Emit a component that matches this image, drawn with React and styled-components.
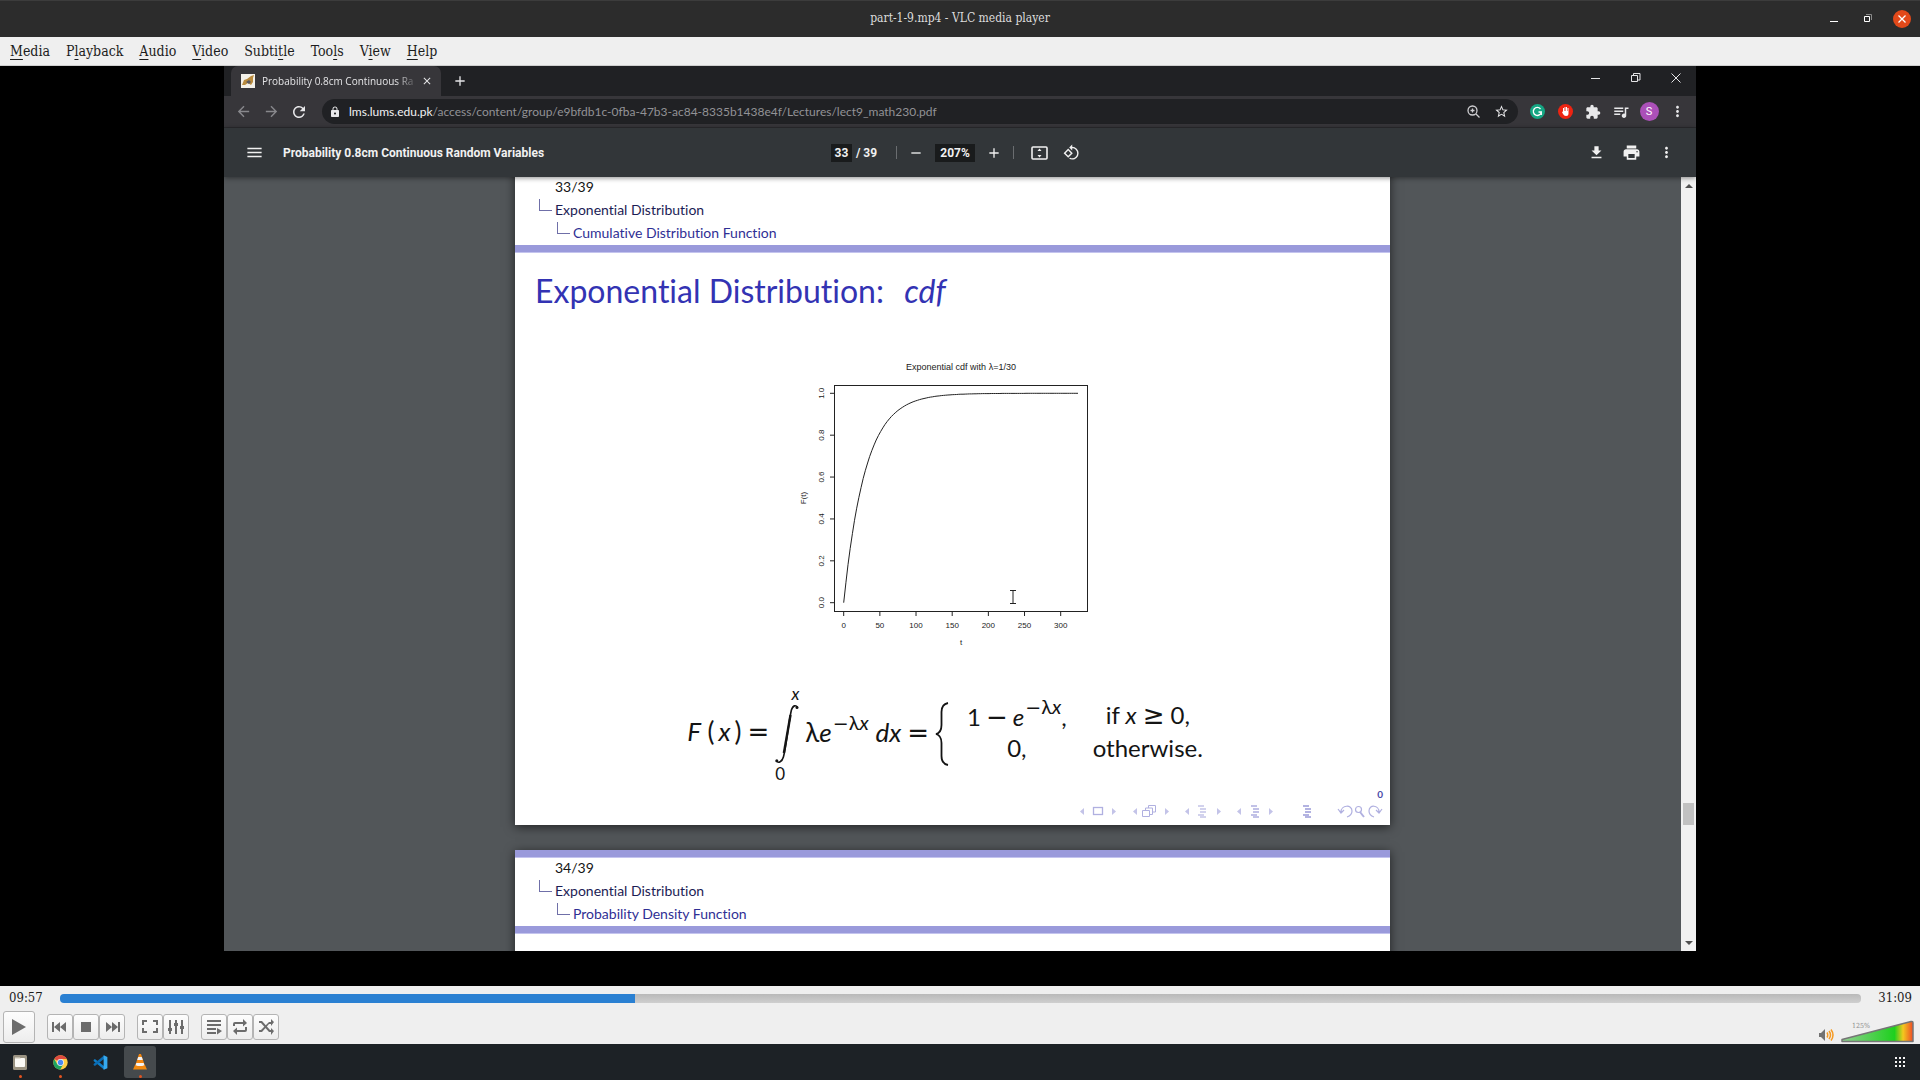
import React from "react";
import styled, { createGlobalStyle, css } from "styled-components";
import {
  MdAdd,
  MdArrowBack,
  MdArrowForward,
  MdClose,
  MdExtension,
  MdFileDownload,
  MdLock,
  MdMenu,
  MdMoreVert,
  MdPrint,
  MdQueueMusic,
  MdRefresh,
  MdRemove,
  MdRotate90DegreesCcw,
  MdStarBorder,
} from "react-icons/md";

const font = {
  shell: '"DejaVu Serif Condensed", "DejaVu Serif", serif',
  chrome: '"Open Sans", "Noto Sans", sans-serif',
  address: 'Lato, "Open Sans", sans-serif',
  pdf: 'Roboto, "Liberation Sans", sans-serif',
  slide: 'Lato, "Open Sans", sans-serif',
  operator: '"DejaVu Sans", sans-serif',
  plot: '"Liberation Sans", sans-serif',
};

const GlobalStyle = createGlobalStyle`
  *, *::before, *::after { box-sizing: border-box; }
  html, body { margin: 0; height: 100%; }
  body { overflow: hidden; background: #000; font-family: ${font.shell}; }
  button { border: 0; padding: 0; background: none; color: inherit; font: inherit; }
  svg { display: block; flex: none; }
`;

const Desktop = styled.div`
  display: flex;
  flex-direction: column;
  height: 100vh;
`;

/* ---------- VLC title and menu ---------- */

const TitleBar = styled.header`
  display: grid;
  grid-template-columns: 1fr auto 1fr;
  align-items: center;
  height: 37px;
  padding: 0 9px;
  background: #2c2c2c;
  border-top: 1px solid #3c3c3c;
  color: #dcdcdc;
`;

const WindowTitle = styled.h1`
  grid-column: 2;
  margin: 0;
  padding-bottom: 2px;
  font-size: 12px;
  line-height: 16px;
  font-weight: 400;
`;

const WindowButtons = styled.div`
  display: flex;
  justify-content: flex-end;
  align-items: center;
  gap: 16px;
`;

const WindowButton = styled.button`
  display: grid;
  place-items: center;
  width: 18px;
  height: 18px;
  border-radius: 50%;
  background: ${(p) => (p.$accent ? "#e2491a" : "transparent")};
  color: #fff;
`;

const MenuBar = styled.nav`
  display: flex;
  align-items: center;
  gap: 16px;
  height: 29px;
  padding: 0 10px 1px;
  background: #efefef;
  border-bottom: 1px solid #cfcfcf;
  color: #1c1c1c;
  font-size: 14px;
  line-height: 18px;
`;

const Mnemonic = styled.span`
  text-decoration: underline;
  text-underline-offset: 3px;
`;

/* ---------- Browser window in the video ---------- */

const VideoArea = styled.main`
  flex: 1;
  min-height: 0;
  display: flex;
  padding: 0 224px 35px;
  background: #000;
`;

const Browser = styled.section`
  flex: 1;
  min-width: 0;
  display: flex;
  flex-direction: column;
  background: #525659;
`;

const TabStrip = styled.div`
  display: flex;
  align-items: flex-start;
  gap: 4px;
  height: 30px;
  padding: 0 8px 0 7px;
  background: #202124;
  color: #e4e4e6;
`;

const Tab = styled.div`
  display: flex;
  align-items: center;
  gap: 7px;
  width: 210px;
  height: 30px;
  padding: 0 8px 0 10px;
  border-radius: 7px 7px 0 0;
  background: #37363a;
  font-family: ${font.chrome};
  font-size: 10px;
  line-height: 16px;
`;

const TabTitle = styled.span`
  flex: 1;
  white-space: nowrap;
  mask-image: linear-gradient(90deg, #000 88%, rgba(0, 0, 0, 0.2));
`;

const IconButton = styled.button`
  display: grid;
  place-items: center;
  flex: none;
  width: ${(p) => p.$size || 24}px;
  height: ${(p) => p.$size || 24}px;
  color: ${(p) => (p.$dim ? "#88888c" : "inherit")};
`;

const BrowserWindowButtons = styled.div`
  display: flex;
  gap: 16px;
  margin-left: auto;
`;

const AddressBar = styled.div`
  display: flex;
  align-items: center;
  gap: 4px;
  height: 32px;
  padding: 0 7px;
  background: #37363a;
  border-bottom: 1px solid #2b2b2e;
  color: #e8e8ea;
`;

const Omnibox = styled.form`
  flex: 1;
  min-width: 0;
  display: flex;
  align-items: center;
  height: 25px;
  margin: 0 3px 0 7px;
  padding: 0 3px 0 7px;
  border-radius: 13px;
  background: #202124;
  font-family: ${font.address};
  font-size: 12px;
  line-height: 18px;
`;

const Host = styled.label`
  margin-left: 8px;
  color: #f2f2f4;
`;

const UrlInput = styled.input`
  flex: 1;
  min-width: 0;
  padding: 0;
  border: 0;
  outline: 0;
  background: none;
  color: #929296;
  font: inherit;
`;

const Badge = styled.span`
  display: grid;
  place-items: center;
  width: ${(p) => p.$size}px;
  height: ${(p) => p.$size}px;
  border-radius: 50%;
  background: ${(p) => p.$color};
  color: #fff;
  font-family: ${font.pdf};
  font-size: 11px;
  line-height: 12px;
`;

const PdfToolbar = styled.div`
  position: relative;
  z-index: 1;
  display: grid;
  grid-template-columns: 1fr auto 1fr;
  align-items: center;
  height: 49px;
  padding: 0 18px;
  background: #323639;
  box-shadow: 0 1px 5px rgba(0, 0, 0, 0.45);
  color: #f1f1f1;
  font-family: ${font.pdf};
  font-size: 12px;
  line-height: 16px;
  font-weight: 700;
`;

const ToolGroup = styled.div`
  display: flex;
  align-items: center;
  gap: ${(p) => p.$gap}px;
  justify-content: ${(p) => (p.$end ? "flex-end" : "flex-start")};
  padding-right: ${(p) => (p.$end ? 0 : 4)}px;
`;

const DocTitle = styled.h2`
  margin: 0;
  font: inherit;
  white-space: nowrap;
`;

const ToolInput = styled.input`
  width: ${(p) => p.$width}px;
  height: 18px;
  padding: 0;
  border: 0;
  background: #191b1c;
  color: inherit;
  font: inherit;
  text-align: center;
`;

const Divider = styled.span`
  width: 1px;
  height: 13px;
  margin: 0 ${(p) => p.$after}px 0 ${(p) => p.$before}px;
  background: #6a6d70;
`;

const Viewer = styled.div`
  flex: 1;
  min-height: 0;
  display: flex;
`;

const Pages = styled.div`
  flex: 1;
  display: flex;
  flex-direction: column;
  align-items: center;
  gap: 25px;
  overflow: hidden;
`;

const ScrollTrack = styled.div`
  display: flex;
  flex-direction: column;
  align-items: center;
  width: 15px;
  padding: 7px 0 6px;
  background: #f1f1f1;
`;

const ScrollSpace = styled.div`
  flex: ${(p) => p.$grow} 0 0;
`;

const ScrollThumb = styled.div`
  width: 11px;
  height: 22px;
  background: #c1c1c1;
`;

/* ---------- Slides ---------- */

const SlidePage = styled.article`
  flex: none;
  display: flex;
  flex-direction: column;
  width: min(875px, 100%);
  aspect-ratio: 4 / 3;
  background: #fff;
  box-shadow: 0 2px 10px rgba(0, 0, 0, 0.6);
  font-family: ${font.slide};
  font-variant-ligatures: none;
  color: #141414;

  &:first-child {
    margin-top: -8px;
  }
`;

const Band = styled.div`
  flex: none;
  height: 8px;
  background: #9a9adb;
  border-bottom: 1px solid #c4c4ee;
`;

const Crumbs = styled.ol`
  flex: none;
  display: flex;
  flex-direction: column;
  height: 68px;
  margin: 0;
  padding: 0 24px;
  list-style: none;
  font-size: 14px;
  line-height: 23px;
`;

const Crumb = styled.li`
  display: flex;
  gap: 3px;
  height: 23px;
  margin-top: ${(p) => (p.$level === 0 ? -2 : 0)}px;
  padding-left: ${(p) => p.$level * 18 - 18}px;
  color: ${(p) => ["#141414", "#1c1c55", "#2f2f94"][p.$level]};
  ${(p) =>
    p.$level === 0 &&
    css`
      padding-left: 16px;
    `}
`;

const Elbow = styled.span`
  width: 13px;
  height: 12px;
  margin-top: 1px;
  border-left: 1px solid #6f6fa8;
  border-bottom: 1px solid #6f6fa8;
`;

const SlideTitle = styled.h3`
  height: 97px;
  margin: 0;
  padding: 16px 20px 0;
  color: #3333b3;
  font-size: 32px;
  line-height: 44px;
  font-weight: 400;
  white-space: nowrap;

  em {
    margin-left: 12px;
  }
`;

const PlotArea = styled.figure`
  display: flex;
  justify-content: center;
  margin: 0;
`;

const PlotSvg = styled.svg`
  font-family: ${font.plot};
  font-size: 8px;
  fill: #222;
`;

const Formula = styled.div`
  display: flex;
  align-items: center;
  justify-content: center;
  height: 100px;
  margin-top: 24px;
  padding-right: 15px;
  font-size: 26px;
  line-height: 33px;
  white-space: nowrap;
`;

const MathText = styled.span`
  padding-bottom: 5px;
`;

const Argument = styled.i`
  margin: 0 4px;
`;

const Operator = styled.span`
  margin: 0 ${(p) => p.$space || 0}px;
  font-family: ${font.operator};
  font-size: ${(p) => (p.$small ? 19 : 26)}px;
  line-height: 1;
`;

const Sup = styled.sup`
  margin-left: 1px;
  font-size: 20px;
  line-height: 0;
  vertical-align: 12px;
`;

const Integral = styled.span`
  display: flex;
  flex-direction: column;
  width: 24px;
  margin-right: 6px;
  font-size: 17px;
  line-height: 20px;
`;

const Limit = styled.span`
  align-self: ${(p) => (p.$upper ? "flex-end" : "flex-start")};
`;

const Cases = styled.span`
  display: grid;
  grid-template-columns: auto auto;
  grid-auto-rows: 33px;
  column-gap: 26px;
  justify-items: center;
  margin-left: 18px;
  padding-bottom: 6px;
  font-size: 24px;
`;

const Counter = styled.div`
  padding-right: 7px;
  color: #4a4aa8;
  font-size: 10px;
  line-height: 20px;
  font-weight: 700;
  text-align: right;
`;

const BeamerNav = styled.nav`
  display: flex;
  align-items: center;
  justify-content: flex-end;
  height: 14px;
  padding-right: 7px;
  color: #c3c3e8;
`;

/* ---------- VLC controls ---------- */

const Controls = styled.footer`
  background: #efefef;
  color: #1c1c1c;
`;

const SeekRow = styled.div`
  display: flex;
  align-items: center;
  gap: 17px;
  height: 24px;
  padding: 0 8px 0 9px;
  font-size: 13px;
  line-height: 16px;
`;

const SeekBar = styled.input`
  flex: 1;
  height: 9px;
  margin: 0;
  appearance: none;
  border-radius: 4px;
  background: linear-gradient(90deg, #2a80d2 var(--played), transparent var(--played)),
    linear-gradient(#b9b9b9, #cfcfcf);

  &::-webkit-slider-thumb {
    appearance: none;
    width: 0;
    height: 0;
  }
`;

const ButtonRow = styled.div`
  display: flex;
  align-items: center;
  gap: 12px;
  height: 34px;
  padding: 0 6px 0 3px;
`;

const ButtonSet = styled.div`
  display: flex;
`;

const PlayerButton = styled.button`
  display: grid;
  place-items: center;
  width: ${(p) => (p.$large ? 32 : 26)}px;
  height: ${(p) => (p.$large ? 32 : 26)}px;
  border: 1px solid #b4b4b4;
  border-radius: 3px;
  background: linear-gradient(#fdfdfd, #ededed);
  color: #6c6c6c;
`;

const Volume = styled.label`
  position: relative;
  display: flex;
  align-items: center;
  align-self: flex-end;
  gap: 6px;
  margin-left: auto;
  padding-bottom: 1px;
`;

const VolumeRange = styled.input`
  position: absolute;
  inset: 0 0 0 auto;
  width: 74px;
  margin: 0;
  opacity: 0;
`;

/* ---------- Taskbar ---------- */

const Taskbar = styled.nav`
  display: flex;
  align-items: center;
  gap: 8px;
  height: 36px;
  padding: 0 10px 0 4px;
  background: #1d2226;
`;

const AppButton = styled.button`
  position: relative;
  display: grid;
  place-items: center;
  width: 32px;
  height: 32px;
  border-radius: 3px;
  background: ${(p) => (p.$active ? "#454a4d" : "transparent")};

  &::after {
    content: "";
    position: absolute;
    left: 15px;
    bottom: 0;
    width: 3px;
    height: 3px;
    border-radius: 50%;
    background: ${(p) => (p.$running ? "#e2531f" : "transparent")};
  }
`;

const GridButton = styled(IconButton)`
  margin-left: auto;
  color: #f4f4f4;
`;

/* ---------- Data ---------- */

const MENUS = [
  ["", "M", "edia"],
  ["P", "l", "ayback"],
  ["", "A", "udio"],
  ["", "V", "ideo"],
  ["Subti", "t", "le"],
  ["Too", "l", "s"],
  ["V", "i", "ew"],
  ["", "H", "elp"],
];

const PLAYED = 597;
const LENGTH = 1869;

/* ---------- Pieces ---------- */

const plotX = (t) => 61.7 + t * 0.7233;
const plotY = (f) => 252.7 - f * 209.4;

function Plot() {
  const points = [];
  for (let t = 0; t <= 324; t += 3) {
    points.push(`${plotX(t).toFixed(1)},${plotY(1 - Math.exp(-t / 30)).toFixed(1)}`);
  }
  return (
    <PlotSvg width="341" height="310" viewBox="0 0 341 310" role="img" aria-label="Exponential cdf">
      <text x="179" y="20" textAnchor="middle" fontSize="9">
        Exponential cdf with λ=1/30
      </text>
      <g fill="none" stroke="#222" strokeWidth="1">
        <rect x="52.5" y="35.5" width="253" height="226" />
        {[0, 0.2, 0.4, 0.6, 0.8, 1].map((f) => (
          <path key={f} d={`M48 ${plotY(f)}H52.5`} />
        ))}
        {[0, 50, 100, 150, 200, 250, 300].map((t) => (
          <path key={t} d={`M${plotX(t)} 261.5V266`} />
        ))}
        <polyline points={points.join(" ")} />
        <path d="M228 240.5H234M231 240.5V253M228 253.5H234" />
      </g>
      {[0, 0.2, 0.4, 0.6, 0.8, 1].map((f) => (
        <text key={f} textAnchor="middle" transform={`translate(42 ${plotY(f)}) rotate(-90)`}>
          {f.toFixed(1)}
        </text>
      ))}
      {[0, 50, 100, 150, 200, 250, 300].map((t) => (
        <text key={t} x={plotX(t)} y="278" textAnchor="middle">
          {t}
        </text>
      ))}
      <text x="179" y="295" textAnchor="middle">
        t
      </text>
      <text textAnchor="middle" transform="translate(24 148) rotate(-90)">
        F(t)
      </text>
    </PlotSvg>
  );
}

function SlideHeader({ number, topic }) {
  return (
    <>
      <Band />
      <Crumbs>
        <Crumb $level={0}>{number}/39</Crumb>
        <Crumb $level={1}>
          <Elbow />
          Exponential Distribution
        </Crumb>
        <Crumb $level={2}>
          <Elbow />
          {topic}
        </Crumb>
      </Crumbs>
      <Band />
    </>
  );
}

const Exponent = () => (
  <Sup>
    <Operator $small>−</Operator>λ<i>x</i>
  </Sup>
);

function CdfFormula() {
  return (
    <Formula>
      <MathText>
        <i>F</i> (<Argument>x</Argument>)<Operator $space={6}>=</Operator>
      </MathText>
      <Integral>
        <Limit $upper>
          <i>x</i>
        </Limit>
        <svg width="24" height="60" viewBox="0 0 24 60">
          <path
            d="M22.500 3.500C21 .8 18 1 16.400 6C14 16 11 44 8.400 53C7 58 3.500 59.500 1.200 57"
            fill="none"
            stroke="#141414"
            strokeWidth="1.600"
          />
          <path d="M15.500 11L8.900 49" stroke="#141414" strokeWidth="2.400" />
          <circle cx="22" cy="3.500" r="1.500" fill="#141414" />
          <circle cx="1.800" cy="56.800" r="1.500" fill="#141414" />
        </svg>
        <Limit>0</Limit>
      </Integral>
      <MathText>
        λ<i>e</i>
        <Exponent /> <i>dx</i>
        <Operator $space={6}>=</Operator>
      </MathText>
      <svg width="14" height="64" viewBox="0 0 14 64">
        <path
          d="M13 1C8 2 6.500 5 6.500 10V23C6.500 28 5 31 1 32C5 33 6.500 36 6.500 41V54C6.500 59 8 62 13 63"
          fill="none"
          stroke="#141414"
          strokeWidth="1.800"
        />
      </svg>
      <Cases>
        <span>
          1<Operator $space={5}>−</Operator>
          <i>e</i>
          <Exponent />,
        </span>
        <span>
          if <i>x</i>
          <Operator $space={6}>≥</Operator>0,
        </span>
        <span>0,</span>
        <span>otherwise.</span>
      </Cases>
    </Formula>
  );
}

const navLines = (x, top) => (
  <path
    d={`M${x} ${top}h6M${x + 2} ${top + 3}h6M${x + 2} ${top + 6}h6M${x} ${top + 9}h6M${x + 2} ${top + 11}h6`}
    strokeWidth="1.500"
  />
);

function BeamerSymbols() {
  return (
    <BeamerNav aria-label="Slide navigation">
      <svg width="304" height="14" viewBox="0 0 304 14" fill="none" stroke="currentColor">
        {[0, 53, 105, 157].map((x) => (
          <g key={x} fill="currentColor" stroke="none">
            <path d={`M${x + 5} 4v7L${x + 1} 7.500z`} />
            <path d={`M${x + 33} 4v7l4-3.500z`} />
          </g>
        ))}
        <g stroke="#b0b0e0">
          <rect x="14.500" y="3.500" width="9" height="7" strokeWidth="1.300" />
          <path d="M63.500 6.500h7v6h-7zM66.500 6V4h7v6.500h-2.500M69.500 4V1.500h7V8H74" />
        </g>
        {navLines(119, 2)}
        <g stroke="#aeaee0">{navLines(172, 2)}</g>
        <g stroke="#9a9ad8">{navLines(224, 2)}</g>
        <g stroke="#b0b0e0" strokeWidth="1.200">
          <path d="M259 5l3 4 3-3M262 8C262 1 273 0 273 7C273 10 271 12 268 13" />
          <circle cx="279.500" cy="5.500" r="3" />
          <path d="M281 8l4 5" strokeWidth="2" />
          <path d="M303 5l-3 4-3-3M300 8C300 1 290 0 290 7C290 10 292 12 295 13" />
        </g>
      </svg>
    </BeamerNav>
  );
}

const PLAYER_ICONS = {
  previous: <path d="M1 4h2v10H1zM3 9l6-5v10zM9 9l6-5v10z" />,
  stop: <path d="M4 4h10v10H4z" />,
  next: <path d="M15 4h2v10h-2zM15 9L9 4v10zM9 9L3 4v10z" />,
  fullscreen: <path d="M1 2h5v2H3v3H1zM12 2h5v5h-2V4h-3zM1 10h2v3h3v2H1zM15 10h2v5h-5v-2h3z" />,
  equalizer: <path d="M2 2h2v8h1v3H4v3H2v-3H1v-3h1zM8 2h2v3h1v3h-1v8H8V8H7V5h1zM14 2h2v6h1v3h-1v5h-2v-5h-1V8h1z" />,
  playlist: <path d="M2 2h14v2H2zM2 6h14v2H2zM2 10h9v2H2zM2 14h9v2H2zM12 10l5 3-5 3.500z" />,
  loop: (
    <path d="M2 8V6q0-2 2-2h8V1l4 4-4 3.500V6H4v2zM16 9v3q0 2-2 2H6v3l-4-4 4-3.500V12h8V9z" />
  ),
  shuffle: (
    <path d="M2 3h3l8 9h1v-2l3 3-3 4v-3h-2L4 5H2zM14 1l3 3-3 4V6h-2L5 14H2v-2h2l8-8h2z" />
  ),
};

function Glyph({ name }) {
  return (
    <svg width="18" height="18" viewBox="0 0 18 18" fill="currentColor">
      {PLAYER_ICONS[name]}
    </svg>
  );
}

function PlayerControl({ name }) {
  return (
    <PlayerButton type="button" aria-label={name}>
      <Glyph name={name} />
    </PlayerButton>
  );
}

export default function App() {
  return (
    <Desktop>
      <GlobalStyle />
      <TitleBar>
        <WindowTitle>part-1-9.mp4 - VLC media player</WindowTitle>
        <WindowButtons>
          <WindowButton aria-label="Minimize">
            <svg width="10" height="10" stroke="#fff">
              <path d="M1 7.500h8" />
            </svg>
          </WindowButton>
          <WindowButton aria-label="Restore">
            <svg width="10" height="10" fill="none" stroke="#fff">
              <path d="M1.500 2.500h5v5h-5z" />
              <path d="M3 .5h5.500V6" stroke="#8a8a8a" />
            </svg>
          </WindowButton>
          <WindowButton $accent aria-label="Close">
            <svg width="10" height="10" stroke="#fff" strokeWidth="1.300">
              <path d="M1.500 1.500l7 7M8.500 1.500l-7 7" />
            </svg>
          </WindowButton>
        </WindowButtons>
      </TitleBar>
      <MenuBar>
        {MENUS.map(([before, key, after]) => (
          <button type="button" key={before + key + after}>
            {before}
            <Mnemonic>{key}</Mnemonic>
            {after}
          </button>
        ))}
      </MenuBar>

      <VideoArea>
        <Browser>
          <TabStrip>
            <Tab>
              <svg width="14" height="14" viewBox="0 0 14 14">
                <rect width="14" height="14" fill="#f4f1ea" />
                <path d="M1 11l2-5 3-1 4-3 3-1-1 3v4l-2 3-3-2-3 2z" fill="#b98b3e" />
                <path d="M5 8l3-2 2 2-2 2z" fill="#5b5a62" />
              </svg>
              <TabTitle>Probability 0.8cm Continuous Ra</TabTitle>
              <IconButton $size={12} aria-label="Close tab">
                <MdClose size={12} />
              </IconButton>
            </Tab>
            <IconButton $size={30} aria-label="New tab">
              <MdAdd size={16} />
            </IconButton>
            <BrowserWindowButtons>
              <IconButton aria-label="Minimize">
                <svg width="10" height="10" stroke="currentColor">
                  <path d="M0 5.500h9" />
                </svg>
              </IconButton>
              <IconButton aria-label="Restore">
                <svg width="10" height="10" fill="none" stroke="currentColor">
                  <path d="M.5 2.500h6v6h-6zM2.500 2V.5H9V7H7" />
                </svg>
              </IconButton>
              <IconButton aria-label="Close">
                <svg width="10" height="10" stroke="currentColor">
                  <path d="M.5.500l9 9M9.500.500l-9 9" />
                </svg>
              </IconButton>
            </BrowserWindowButtons>
          </TabStrip>

          <AddressBar>
            <IconButton $dim aria-label="Back">
              <MdArrowBack size={17} />
            </IconButton>
            <IconButton $dim aria-label="Forward">
              <MdArrowForward size={17} />
            </IconButton>
            <IconButton aria-label="Reload">
              <MdRefresh size={18} />
            </IconButton>
            <Omnibox>
              <MdLock size={12} />
              <Host htmlFor="address">lms.lums.edu.pk</Host>
              <UrlInput
                id="address"
                defaultValue="/access/content/group/e9bfdb1c-0fba-47b3-ac84-8335b1438e4f/Lectures/lect9_math230.pdf"
              />
              <IconButton $size={28} type="button" aria-label="Zoom">
                <svg width="13" height="13" viewBox="0 0 13 13" fill="none" stroke="#cfcfd2" strokeWidth="1.300">
                  <circle cx="5.500" cy="5.500" r="4.500" />
                  <path d="M9 9l3.500 3.500M5.500 3.500v4M3.500 5.500h4" />
                </svg>
              </IconButton>
              <IconButton $size={28} type="button" aria-label="Bookmark">
                <MdStarBorder size={15} />
              </IconButton>
            </Omnibox>
            <IconButton aria-label="Grammarly">
              <Badge $size={15} $color="#15a683">
                <svg width="11" height="11" viewBox="0 0 11 11" fill="none" stroke="#fff" strokeWidth="1.300">
                  <path d="M8.500 3A4 4 0 1 0 9.300 6H6.500M9.300 6v3" />
                </svg>
              </Badge>
            </IconButton>
            <IconButton aria-label="Content blocker">
              <Badge $size={15} $color="#ee2412">
                <svg width="11" height="11" viewBox="0 0 11 11" fill="#fff">
                  <path d="M3 2h1v3h.5V1h1v4H6V1h1v4h.5V2h1v5.500Q8.500 10 6 10 4 10 3 8L2 6l1-.5z" />
                </svg>
              </Badge>
            </IconButton>
            <IconButton aria-label="Extensions">
              <MdExtension size={16} />
            </IconButton>
            <IconButton aria-label="Media">
              <MdQueueMusic size={18} />
            </IconButton>
            <IconButton aria-label="Profile">
              <Badge $size={19} $color="#ab50b8">
                S
              </Badge>
            </IconButton>
            <IconButton aria-label="Browser menu">
              <MdMoreVert size={17} />
            </IconButton>
          </AddressBar>

          <PdfToolbar>
            <ToolGroup $gap={17}>
              <IconButton aria-label="Sidebar">
                <MdMenu size={19} />
              </IconButton>
              <DocTitle>Probability 0.8cm Continuous Random Variables</DocTitle>
            </ToolGroup>
            <ToolGroup $gap={4}>
              <ToolInput $width={21} defaultValue="33" aria-label="Page" />
              <span>/ 39</span>
              <Divider $before={15} $after={0} />
              <IconButton aria-label="Zoom out" $size={30}>
                <MdRemove size={16} />
              </IconButton>
              <ToolInput $width={40} defaultValue="207%" aria-label="Zoom level" />
              <IconButton aria-label="Zoom in" $size={30}>
                <MdAdd size={16} />
              </IconButton>
              <Divider $before={0} $after={7} />
              <IconButton aria-label="Fit to page" $size={28}>
                <svg width="17" height="14" viewBox="0 0 17 14" fill="none" stroke="currentColor" strokeWidth="1.600">
                  <rect x="1" y="1" width="15" height="12" rx="1" />
                  <path d="M8.500 2.500l2 2.500h-4zM8.500 11.500l2-2.500h-4z" fill="currentColor" stroke="none" />
                </svg>
              </IconButton>
              <IconButton aria-label="Rotate" $size={28}>
                <MdRotate90DegreesCcw size={17} />
              </IconButton>
            </ToolGroup>
            <ToolGroup $gap={11} $end>
              <IconButton aria-label="Download">
                <MdFileDownload size={17} />
              </IconButton>
              <IconButton aria-label="Print">
                <MdPrint size={19} />
              </IconButton>
              <IconButton aria-label="More">
                <MdMoreVert size={17} />
              </IconButton>
            </ToolGroup>
          </PdfToolbar>

          <Viewer>
            <Pages>
              <SlidePage>
                <SlideHeader number={33} topic="Cumulative Distribution Function" />
                <SlideTitle>
                  Exponential Distribution: <em>cdf</em>
                </SlideTitle>
                <PlotArea>
                  <Plot />
                </PlotArea>
                <CdfFormula />
                <Counter>0</Counter>
                <BeamerSymbols />
              </SlidePage>
              <SlidePage>
                <SlideHeader number={34} topic="Probability Density Function" />
              </SlidePage>
            </Pages>
            <ScrollTrack>
              <svg width="8" height="4" fill="#505050">
                <path d="M0 4l4-4 4 4z" />
              </svg>
              <ScrollSpace $grow={615} />
              <ScrollThumb />
              <ScrollSpace $grow={116} />
              <svg width="8" height="4" fill="#505050">
                <path d="M0 0l4 4 4-4z" />
              </svg>
            </ScrollTrack>
          </Viewer>
        </Browser>
      </VideoArea>

      <Controls>
        <SeekRow>
          <span>09:57</span>
          <SeekBar
            type="range"
            min="0"
            max={LENGTH}
            defaultValue={PLAYED}
            aria-label="Position"
            style={{ "--played": `${(PLAYED / LENGTH) * 100}%` }}
          />
          <span>31:09</span>
        </SeekRow>
        <ButtonRow>
          <PlayerButton $large type="button" aria-label="Play">
            <svg width="16" height="18" viewBox="0 0 16 18" fill="currentColor">
              <path d="M1 1l14 8-14 8z" />
            </svg>
          </PlayerButton>
          <ButtonSet>
            <PlayerControl name="previous" />
            <PlayerControl name="stop" />
            <PlayerControl name="next" />
          </ButtonSet>
          <ButtonSet>
            <PlayerControl name="fullscreen" />
            <PlayerControl name="equalizer" />
          </ButtonSet>
          <ButtonSet>
            <PlayerControl name="playlist" />
            <PlayerControl name="loop" />
            <PlayerControl name="shuffle" />
          </ButtonSet>
          <Volume aria-label="Volume">
            <svg width="15" height="24" viewBox="0 -3 15 24">
              <path d="M0 11h2l4-4v12l-4-4H0z" fill="#727272" />
              <path d="M8 10.500q1.500 2.500 0 5M10 9q3 4 0 8M12 7.500q4 5.500 0 11" fill="none" stroke="#f59a23" strokeWidth="1.500" />
            </svg>
            <svg width="74" height="24" viewBox="0 0 74 24">
              <defs>
                <linearGradient id="level">
                  <stop offset="0" stopColor="#8fcf8f" />
                  <stop offset="0.740" stopColor="#1ed01e" />
                  <stop offset="0.860" stopColor="#f4c81e" />
                  <stop offset="1" stopColor="#ef4a26" />
                </linearGradient>
              </defs>
              <path d="M2 22.500V20.500L71 2.500Q73 2 73 4V22.500z" fill="url(#level)" stroke="#757575" strokeWidth="1.500" strokeLinejoin="round" />
              <text x="12" y="9" fontSize="7" fill="#8a8a8a">
                125%
              </text>
            </svg>
            <VolumeRange type="range" min="0" max="125" defaultValue="125" aria-label="Volume" />
          </Volume>
        </ButtonRow>
      </Controls>

      <Taskbar aria-label="Taskbar">
        <AppButton $running aria-label="Files">
          <svg width="14" height="15" viewBox="0 0 14 15">
            <rect width="14" height="15" rx="1.500" fill="#9a9382" />
            <rect x="2" y="3" width="10" height="9" rx="1" fill="#fbfaf6" />
            <path d="M2 2.500h5l1 1.500H2z" fill="#e4e0d4" />
          </svg>
        </AppButton>
        <AppButton $running aria-label="Chrome">
          <svg width="15" height="15" viewBox="0 0 48 48">
            <circle cx="24" cy="24" r="23" fill="#ffce44" />
            <path d="M24 24L4 12.500A23 23 0 0 1 44 12.500L44 13H24z" fill="#de4b3f" />
            <path d="M4 12.500A23 23 0 0 0 23 47L33 29 24 24 14 30z" fill="#1da462" />
            <circle cx="24" cy="24" r="11" fill="#f1f1f1" />
            <circle cx="24" cy="24" r="8.500" fill="#4a8af4" />
          </svg>
        </AppButton>
        <AppButton aria-label="Code">
          <svg width="15" height="15" viewBox="0 0 24 24">
            <path d="M1 8l2-1.500L18 18v5.500L1 9.500z" fill="#0f7fc9" />
            <path d="M1 16l2 1.500L18 6V.5L1 14.500z" fill="#0a6cb3" />
            <path d="M17 .5L23 3v18l-6 2.500z" fill="#36a9ee" />
          </svg>
        </AppButton>
        <AppButton $running $active aria-label="VLC">
          <svg width="14" height="16" viewBox="0 0 14 16">
            <path d="M2 11h10l2 4.500H0z" fill="#f08a10" />
            <path d="M6 0h2l4 12q-5 2.500-10 0z" fill="#f5870f" />
            <path d="M5.200 3h3.600l1 3H4.200zM3.300 9h7.400l.7 2.200q-4.400 1.800-8.800 0z" fill="#f3f3f3" />
          </svg>
        </AppButton>
        <GridButton $size={20} aria-label="Show applications">
          <svg width="10" height="10" fill="currentColor">
            <path d="M0 0h2v2H0zM4 0h2v2H4zM8 0h2v2H8zM0 4h2v2H0zM4 4h2v2H4zM8 4h2v2H8zM0 8h2v2H0zM4 8h2v2H4zM8 8h2v2H8z" />
          </svg>
        </GridButton>
      </Taskbar>
    </Desktop>
  );
}
